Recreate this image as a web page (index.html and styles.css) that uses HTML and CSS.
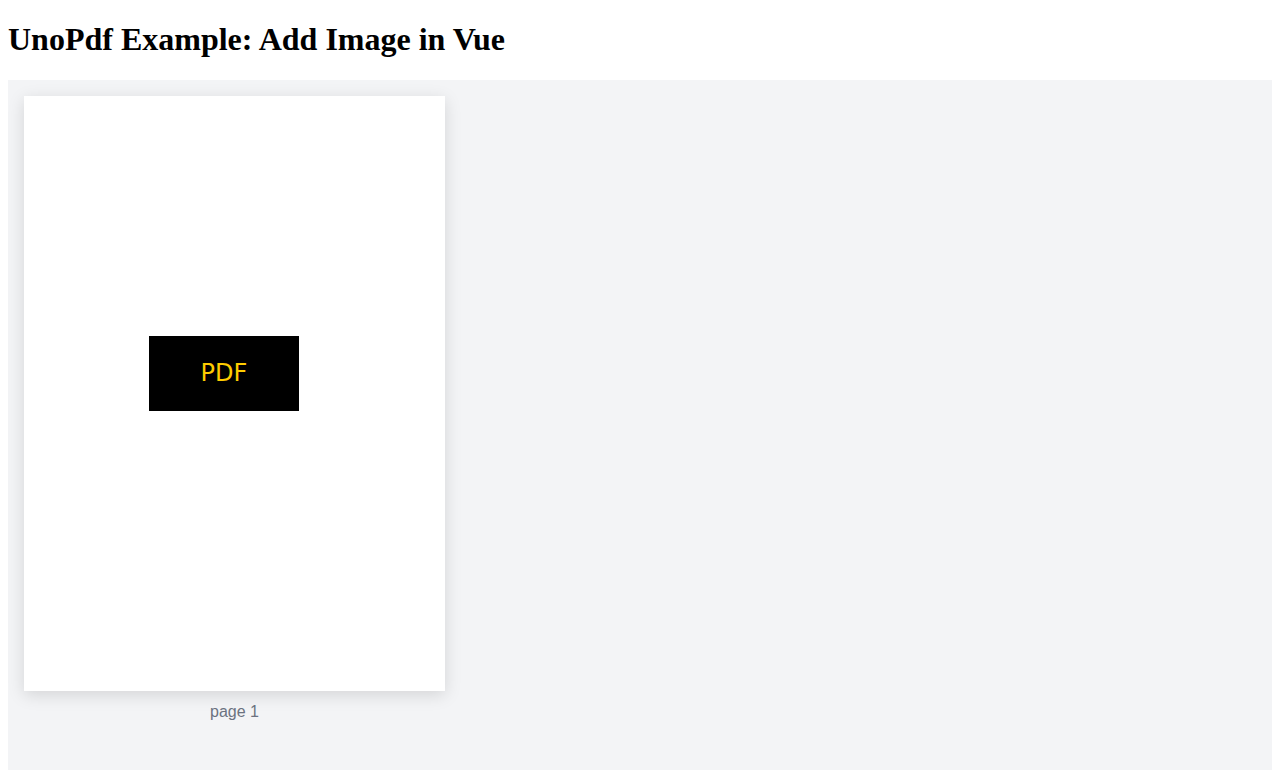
FILE: index.html
```html
<!DOCTYPE html>
<html>
<head>
<meta charset="utf-8">
<title>UnoPdf Example: Add Image in Vue</title>
<link rel="stylesheet" href="styles.css">
</head>
<body>
<h1 class="title">UnoPdf Example: Add Image in Vue</h1>
<div class="viewer">
  <div class="page-wrap">
    <div class="page">
      <svg class="pdf-image" width="150" height="75" viewBox="0 0 150 75" xmlns="http://www.w3.org/2000/svg">
        <rect width="150" height="75" fill="#000"/>
        <text class="pdf-text" x="75" y="37.5" text-anchor="middle" dominant-baseline="middle">PDF</text>
      </svg>
    </div>
    <div class="page-label">page 1</div>
  </div>
</div>
</body>
</html>
```
FILE: styles.css
```css
body {
  margin: 8px;
  font-family: "Liberation Serif", "Times New Roman", serif;
}
.title {
  font-size: 32px;
  font-weight: bold;
  margin: 13.44px 0 21.44px;
  line-height: 37px;
}
.viewer {
  background: #f3f4f6;
  padding: 16px 16px 48px;
  display: flex;
  align-items: flex-start;
  height: 690px;
  box-sizing: border-box;
}
.page-wrap {
  display: flex;
  flex-direction: column;
  align-items: center;
  gap: 12px;
}
.page {
  width: 421px;
  height: 595px;
  background: #fff;
  box-shadow: 0 4px 16px rgba(0, 0, 0, 0.13);
  display: flex;
  padding: 240px 0 0 125px;
  box-sizing: border-box;
}
.pdf-image {
  display: block;
}
.pdf-text {
  font-family: "DejaVu Sans", sans-serif;
  font-size: 24px;
  fill: #ffcc00;
}
.page-label {
  font-family: "Liberation Sans", Arial, sans-serif;
  font-size: 16px;
  color: #6b7280;
  line-height: 18px;
}
```
